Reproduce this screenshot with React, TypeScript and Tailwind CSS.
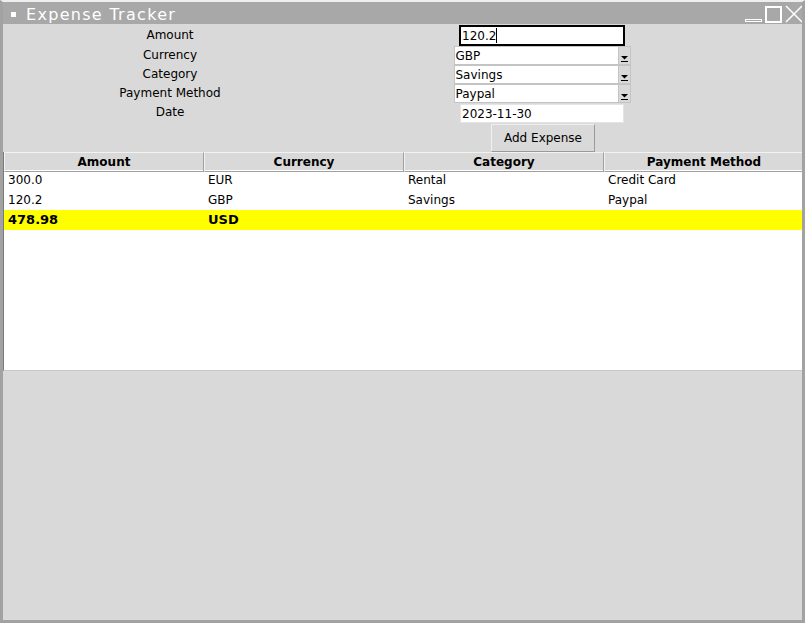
import React from "react";

const rows = [
  { amount: "300.0", currency: "EUR", category: "Rental", method: "Credit Card" },
  { amount: "120.2", currency: "GBP", category: "Savings", method: "Paypal" },
];

function Combo({ value }: { value: string }) {
  return (
    <div className="w-[177px] h-[19px] bg-white border border-[#c4c4c4] flex items-center">
      <span className="flex-1 pl-[1px] leading-none">{value}</span>
      <div className="w-[12px] h-[17px] bg-[#d9d9d9] border-l border-[#c4c4c4] flex items-end justify-center pb-[2px]">
        <svg width="9" height="7" viewBox="0 0 9 7">
          <path d="M1 1 L8 1 L4.5 4.5 Z" fill="#000" />
          <rect x="1" y="6" width="7" height="1" fill="#000" />
        </svg>
      </div>
    </div>
  );
}

export default function App() {
  const labels = ["Amount", "Currency", "Category", "Payment Method", "Date"];

  return (
    <div className="w-[805px] h-[623px] flex flex-col bg-[#d9d9d9] border-t-2 border-t-[#eeeeee] border-x-[3px] border-x-[#a2a2a2] border-b-[3px] border-b-[#a2a2a2] text-[12px] text-black font-['DejaVu_Sans',sans-serif] overflow-hidden">
      {/* Title bar */}
      <div className="h-[22px] bg-[#a8a8a8] flex items-center shrink-0 -mx-[3px] pl-[11px] pr-[2px]">
        <div className="w-[5px] h-[5px] bg-white mt-[2px]" />
        <span className="ml-[10px] mt-[3px] text-white text-[16px] tracking-[1.3px] leading-none">Expense Tracker</span>
        <div className="flex-1" />
        <div className="flex items-end gap-[3px] mt-[2px]">
          <div className="w-[17px] h-[3px] border border-white mb-[1px]" />
          <div className="w-[17px] h-[17px] border-2 border-white" />
          <svg width="18" height="18" viewBox="0 0 18 18">
            <path d="M1 1 L17 17 M17 1 L1 17" stroke="#fff" strokeWidth="1.5" />
          </svg>
        </div>
      </div>

      {/* Form */}
      <div className="grid grid-cols-[334px_408px] shrink-0 pt-[1px]">
        <div className="flex flex-col">
          {labels.map((l, i) => (
            <div
              key={l}
              className={`flex items-center justify-center ${i === 0 ? "h-[20px]" : i === 4 ? "h-[20px]" : "h-[19px]"}`}
            >
              {l}
            </div>
          ))}
        </div>
        <div className="flex flex-col items-center pl-[2px]">
          <div className="w-[166px] h-[21px] bg-white border-2 border-black flex items-center pl-[1px]">
            <span className="leading-none">120.2</span>
            <span className="w-[1px] h-[15px] bg-black" />
          </div>
          <Combo value="GBP" />
          <Combo value="Savings" />
          <Combo value="Paypal" />
          <div className="mt-[1px] w-[164px] h-[19px] bg-white border border-[#e4e4e4] flex items-center pl-[1px]">
            2023-11-30
          </div>
          <button className="mt-[1px] w-[104px] h-[28px] bg-[#d9d9d9] border border-t-[#f0f0f0] border-l-[#f0f0f0] border-r-[#9a9a9a] border-b-[#9a9a9a] ml-[2px]">
            Add Expense
          </button>
        </div>
      </div>

      {/* Table */}
      <div className="h-[219px] bg-white border-l border-l-[#7a7a7a] border-b border-b-[#c8c8c8] flex flex-col shrink-0">
        <div className="grid grid-cols-[200px_200px_200px_200px] h-[18px] bg-[#d9d9d9] font-bold">
          {["Amount", "Currency", "Category", "Payment Method"].map((h) => (
            <div
              key={h}
              className="flex items-center justify-center border border-t-[#f2f2f2] border-l-[#f2f2f2] border-r-[#a0a0a0] border-b-[#a0a0a0]"
            >
              {h}
            </div>
          ))}
        </div>
        {rows.map((r) => (
          <div key={r.amount} className="grid grid-cols-[200px_200px_200px_200px] h-[20px] items-center">
            <div className="pl-[4px]">{r.amount}</div>
            <div className="pl-[4px]">{r.currency}</div>
            <div className="pl-[4px]">{r.category}</div>
            <div className="pl-[4px]">{r.method}</div>
          </div>
        ))}
        <div className="grid grid-cols-[200px_200px_200px_200px] h-[20px] items-center bg-[#ffff00] font-bold text-[13px]">
          <div className="pl-[4px]">478.98</div>
          <div className="pl-[4px]">USD</div>
          <div />
          <div />
        </div>
      </div>
    </div>
  );
}
